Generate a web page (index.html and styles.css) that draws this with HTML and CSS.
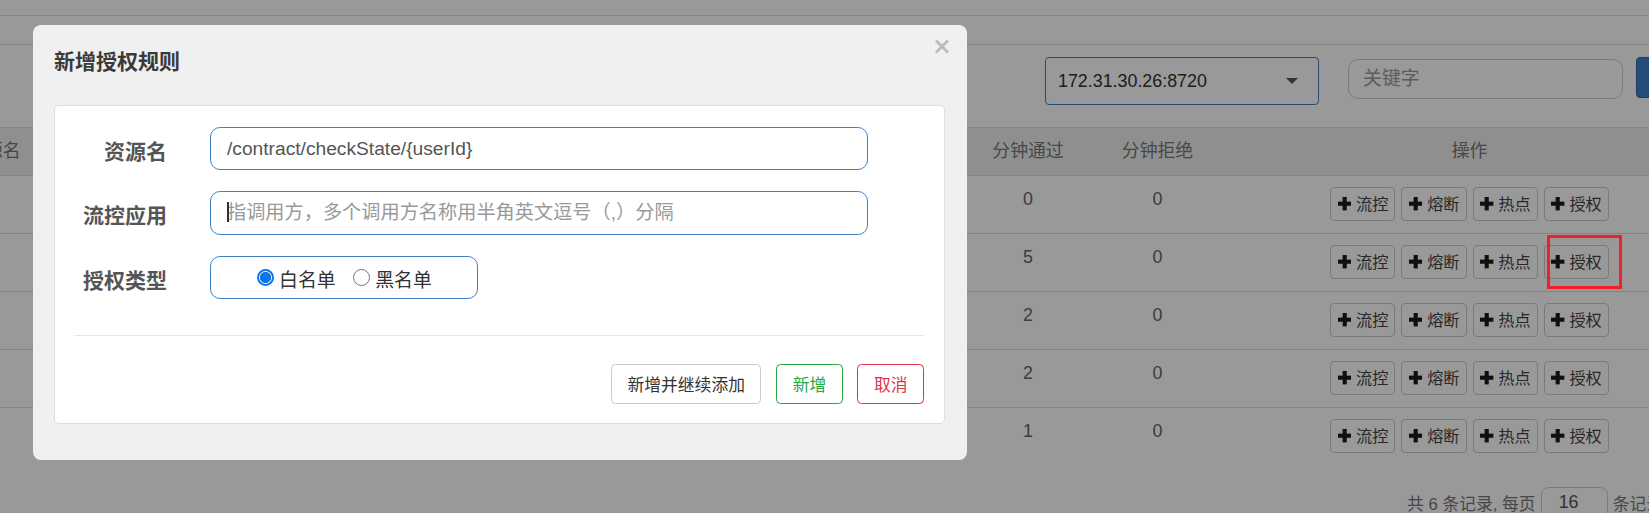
FILE: index.html
```html
<!DOCTYPE html>
<html lang="zh-CN">
<head>
<meta charset="utf-8">
<title>簇点链路</title>
<link rel="stylesheet" href="styles.css">
</head>
<body>
<div class="page">
  <div class="nav-top"></div>
  <div class="nav-sub"></div>
  <div class="toolbar">
    <div class="select"><span>172.31.30.26:8720</span><span class="caret"></span></div>
    <input class="search" type="text" placeholder="关键字">
    <button class="btn-primary" type="button">刷新</button>
  </div>
  <table class="grid">
    <colgroup>
      <col class="c-name"><col class="c-num"><col class="c-num"><col class="c-num"><col class="c-num"><col class="c-num"><col class="c-num2"><col class="c-ops">
    </colgroup>
    <thead>
      <tr><th class="left">资源名</th><th>通过QPS</th><th>拒绝QPS</th><th>并发数</th><th>平均RT</th><th>分钟通过</th><th>分钟拒绝</th><th>操作</th></tr>
    </thead>
    <tbody>
      <tr><td class="left"></td><td>0</td><td>0</td><td>0</td><td>0</td><td>0</td><td>0</td>
        <td><div class="ops"><button class="op"><svg viewBox="0 0 13 13"><rect x="0" y="4.5" width="13" height="4"/><rect x="4.5" y="0" width="4" height="13"/></svg>流控</button><button class="op"><svg viewBox="0 0 13 13"><rect x="0" y="4.5" width="13" height="4"/><rect x="4.5" y="0" width="4" height="13"/></svg>熔断</button><button class="op"><svg viewBox="0 0 13 13"><rect x="0" y="4.5" width="13" height="4"/><rect x="4.5" y="0" width="4" height="13"/></svg>热点</button><button class="op"><svg viewBox="0 0 13 13"><rect x="0" y="4.5" width="13" height="4"/><rect x="4.5" y="0" width="4" height="13"/></svg>授权</button></div></td></tr>
      <tr><td class="left"></td><td>0</td><td>0</td><td>0</td><td>0</td><td>5</td><td>0</td>
        <td><div class="ops"><button class="op"><svg viewBox="0 0 13 13"><rect x="0" y="4.5" width="13" height="4"/><rect x="4.5" y="0" width="4" height="13"/></svg>流控</button><button class="op"><svg viewBox="0 0 13 13"><rect x="0" y="4.5" width="13" height="4"/><rect x="4.5" y="0" width="4" height="13"/></svg>熔断</button><button class="op"><svg viewBox="0 0 13 13"><rect x="0" y="4.5" width="13" height="4"/><rect x="4.5" y="0" width="4" height="13"/></svg>热点</button><button class="op"><svg viewBox="0 0 13 13"><rect x="0" y="4.5" width="13" height="4"/><rect x="4.5" y="0" width="4" height="13"/></svg>授权</button></div></td></tr>
      <tr><td class="left"></td><td>0</td><td>0</td><td>0</td><td>0</td><td>2</td><td>0</td>
        <td><div class="ops"><button class="op"><svg viewBox="0 0 13 13"><rect x="0" y="4.5" width="13" height="4"/><rect x="4.5" y="0" width="4" height="13"/></svg>流控</button><button class="op"><svg viewBox="0 0 13 13"><rect x="0" y="4.5" width="13" height="4"/><rect x="4.5" y="0" width="4" height="13"/></svg>熔断</button><button class="op"><svg viewBox="0 0 13 13"><rect x="0" y="4.5" width="13" height="4"/><rect x="4.5" y="0" width="4" height="13"/></svg>热点</button><button class="op"><svg viewBox="0 0 13 13"><rect x="0" y="4.5" width="13" height="4"/><rect x="4.5" y="0" width="4" height="13"/></svg>授权</button></div></td></tr>
      <tr><td class="left"></td><td>0</td><td>0</td><td>0</td><td>0</td><td>2</td><td>0</td>
        <td><div class="ops"><button class="op"><svg viewBox="0 0 13 13"><rect x="0" y="4.5" width="13" height="4"/><rect x="4.5" y="0" width="4" height="13"/></svg>流控</button><button class="op"><svg viewBox="0 0 13 13"><rect x="0" y="4.5" width="13" height="4"/><rect x="4.5" y="0" width="4" height="13"/></svg>熔断</button><button class="op"><svg viewBox="0 0 13 13"><rect x="0" y="4.5" width="13" height="4"/><rect x="4.5" y="0" width="4" height="13"/></svg>热点</button><button class="op"><svg viewBox="0 0 13 13"><rect x="0" y="4.5" width="13" height="4"/><rect x="4.5" y="0" width="4" height="13"/></svg>授权</button></div></td></tr>
      <tr><td class="left"></td><td>0</td><td>0</td><td>0</td><td>0</td><td>1</td><td>0</td>
        <td><div class="ops"><button class="op"><svg viewBox="0 0 13 13"><rect x="0" y="4.5" width="13" height="4"/><rect x="4.5" y="0" width="4" height="13"/></svg>流控</button><button class="op"><svg viewBox="0 0 13 13"><rect x="0" y="4.5" width="13" height="4"/><rect x="4.5" y="0" width="4" height="13"/></svg>熔断</button><button class="op"><svg viewBox="0 0 13 13"><rect x="0" y="4.5" width="13" height="4"/><rect x="4.5" y="0" width="4" height="13"/></svg>热点</button><button class="op"><svg viewBox="0 0 13 13"><rect x="0" y="4.5" width="13" height="4"/><rect x="4.5" y="0" width="4" height="13"/></svg>授权</button></div></td></tr>
    </tbody>
  </table>
  <div class="pager"><span>共 6 条记录, 每页</span><input class="page-size" type="text" value="16"><span>条记录</span></div>
</div>

<div class="backdrop"></div>

<div class="modal">
  <div class="modal-header">
    <h3 class="modal-title">新增授权规则</h3>
    <button class="close" type="button" aria-label="关闭"><svg viewBox="0 0 16 15"><path d="M2 1.5 L14 13.5 M14 1.5 L2 13.5"/></svg></button>
  </div>
  <div class="panel">
    <div class="form">
      <label class="label">资源名</label>
      <input class="field" type="text" value="/contract/checkState/{userId}">
      <label class="label">流控应用</label>
      <div class="field-wrap">
        <input class="field" type="text" placeholder="指调用方，多个调用方名称用半角英文逗号（,）分隔">
        <span class="text-caret"></span>
      </div>
      <label class="label">授权类型</label>
      <div class="radio-box">
        <label class="radio"><input type="radio" name="strategy" checked><span>白名单</span></label>
        <label class="radio"><input type="radio" name="strategy"><span>黑名单</span></label>
      </div>
    </div>
    <div class="divider"></div>
    <div class="footer">
      <button class="btn btn-default" type="button">新增并继续添加</button>
      <button class="btn btn-success" type="button">新增</button>
      <button class="btn btn-danger" type="button">取消</button>
    </div>
  </div>
</div>

<div class="mark"></div>
</body>
</html>
```

FILE: styles.css
```css
* { box-sizing: border-box; }

html, body {
  margin: 0;
  padding: 0;
  overflow: hidden;
  background: #ffffff;
}

body {
  width: 1649px;
  height: 513px;
  position: relative;
  font-family: "Liberation Sans", "Noto Sans CJK SC", sans-serif;
  color: #333;
}

/* ---------- underlying page ---------- */
.page {
  width: 1762px;
  margin-left: -45px;
}

.nav-top {
  height: 16px;
  border-bottom: 1px solid #ddd;
}

.nav-sub {
  height: 29px;
  border-bottom: 1px solid #ddd;
}

.toolbar {
  height: 82px;
  padding-top: 12px;
  display: flex;
  justify-content: flex-end;
  align-items: flex-start;
}

.select {
  width: 274px;
  height: 48px;
  border: 1px solid #3f83c6;
  border-radius: 4px;
  padding: 0 20px 0 12px;
  display: flex;
  align-items: center;
  justify-content: space-between;
  font-size: 17.85px;
  color: #333;
  background: #fff;
}

.caret {
  width: 0;
  height: 0;
  border-left: 6px solid transparent;
  border-right: 6px solid transparent;
  border-top: 6px solid #555;
}

.search {
  width: 275px;
  height: 40px;
  margin: 2px 0 0 29px;
  border: 1px solid #ccc;
  border-radius: 10px;
  padding: 0 14px;
  font-family: "Liberation Sans", "Noto Sans CJK SC", sans-serif;
  font-size: 18.9px;
  background: #fff;
}

.search::placeholder { color: #999; }

.btn-primary {
  width: 81px;
  height: 41px;
  margin-left: 13px;
  border: 1px solid #2e6da4;
  border-radius: 4px;
  background: #3d82c6;
  color: #fff;
  font-family: "Liberation Sans", "Noto Sans CJK SC", sans-serif;
  font-size: 16.8px;
}

.grid {
  width: 1762px;
  table-layout: fixed;
  border-collapse: collapse;
  font-size: 17.85px;
}

.c-name { width: 488px; }
.c-num { width: 130px; }
.c-num2 { width: 129px; }
.c-ops { width: 495px; }

.grid th {
  font-weight: normal;
  color: #777;
  background: #efefef;
  border-top: 1px solid #ddd;
  padding: 11px 8px 12px;
  line-height: 24px;
  text-align: center;
}

.grid td {
  border-top: 1px solid #ddd;
  padding: 11px 8px 12px;
  line-height: 24px;
  text-align: center;
  vertical-align: top;
  color: #666;
}

.grid .left { text-align: left; padding-left: 12px; }

.ops {
  display: flex;
  justify-content: center;
  gap: 6px;
}

.op {
  height: 34px;
  display: flex;
  align-items: center;
  gap: 4.7px;
  padding: 0 6px 0 6.7px;
  border: 1px solid #ccc;
  border-radius: 4px;
  background: #fff;
  color: #444;
  font-family: "Liberation Sans", "Noto Sans CJK SC", sans-serif;
  font-size: 16.2px;
  line-height: 1;
}

.op svg {
  width: 13.4px;
  height: 13.4px;
  fill: #1a1a1a;
  flex: none;
}

.pager {
  margin-top: 22px;
  padding-right: 54px;
  display: flex;
  justify-content: flex-end;
  align-items: center;
  font-size: 16.8px;
  color: #777;
}

.page-size {
  width: 67px;
  height: 31px;
  margin: 0 5px;
  border: 1px solid #ccc;
  border-radius: 8px;
  padding: 0 17px;
  font-family: "Liberation Sans", sans-serif;
  font-size: 17.85px;
  color: #555;
  background: #fff;
}

/* ---------- backdrop ---------- */
.backdrop {
  position: absolute;
  inset: 0;
  background: rgba(0, 0, 0, 0.4);
}

/* ---------- modal ---------- */
.modal {
  position: absolute;
  left: 33px;
  top: 25px;
  width: 934px;
  background: #f0f0f0;
  border-radius: 8px;
  padding: 0 22px 36px 21px;
}

.modal-header {
  position: relative;
  padding-top: 22px;
  height: 80px;
}

.modal-title {
  margin: 0;
  font-size: 21px;
  line-height: 30px;
  font-weight: bold;
  color: #3a3a3a;
}

.close {
  position: absolute;
  right: -5px;
  top: 14px;
  width: 16px;
  height: 15px;
  padding: 0;
  border: 0;
  background: none;
}

.close svg {
  display: block;
  width: 16px;
  height: 15px;
  fill: none;
  stroke: #bdbdbd;
  stroke-width: 3;
}

.panel {
  background: #fff;
  border: 1px solid #ddd;
  border-radius: 5px;
  padding: 21px 20px 19px 20px;
}

.form {
  display: grid;
  grid-template-columns: 92px 657.5px;
  column-gap: 43px;
  row-gap: 21px;
}

.label {
  text-align: right;
  font-size: 21px;
  font-weight: bold;
  color: #555;
  line-height: 37px;
  padding-top: 6px;
  white-space: nowrap;
}

.field-wrap { position: relative; }

.field {
  width: 100%;
  height: 43.4px;
  border: 1px solid #3f83c6;
  border-radius: 10px;
  padding: 0 16px;
  font-family: "Liberation Sans", "Noto Sans CJK SC", sans-serif;
  font-size: 19.2px;
  color: #555;
  background: #fff;
  outline: none;
}

.field::placeholder {
  color: #999;
  font-size: 19.2px;
}

.text-caret {
  position: absolute;
  left: 17px;
  top: 11px;
  width: 1.5px;
  height: 20px;
  background: #333;
}

.radio-box {
  width: 268.4px;
  height: 43.4px;
  border: 1px solid #3f83c6;
  border-radius: 10px;
  display: flex;
  justify-content: center;
  align-items: center;
  gap: 17px;
  padding-top: 3px;
}

.radio {
  display: flex;
  align-items: center;
  gap: 5px;
  font-size: 18.9px;
  color: #333;
}

.radio input {
  appearance: none;
  -webkit-appearance: none;
  margin: 0;
  margin-top: -3px;
  width: 17.5px;
  height: 17.5px;
  border: 1.5px solid #767676;
  border-radius: 50%;
  background: #fff;
}

.radio input:checked {
  border: 2px solid #0a75f0;
  background: radial-gradient(circle, #0a75f0 0 5.3px, #fff 5.9px);
}

.divider {
  margin-top: 35.6px;
  height: 1px;
  background: #e5e5e5;
}

.footer {
  margin-top: 28px;
  display: flex;
  justify-content: flex-end;
  gap: 14.7px;
}

.btn {
  height: 40.4px;
  padding: 0 15.5px;
  border-radius: 4.5px;
  background: #fff;
  font-family: "Liberation Sans", "Noto Sans CJK SC", sans-serif;
  font-size: 16.8px;
}

.btn-default { border: 1px solid #ccc; color: #333; }
.btn-success { border: 1px solid #28a745; color: #28a745; }
.btn-danger { border: 1px solid #dc3545; color: #dc3545; }

/* ---------- annotation ---------- */
.mark {
  position: absolute;
  left: 1547px;
  top: 235px;
  width: 75px;
  height: 54px;
  border: 3px solid #f0202a;
}
```
